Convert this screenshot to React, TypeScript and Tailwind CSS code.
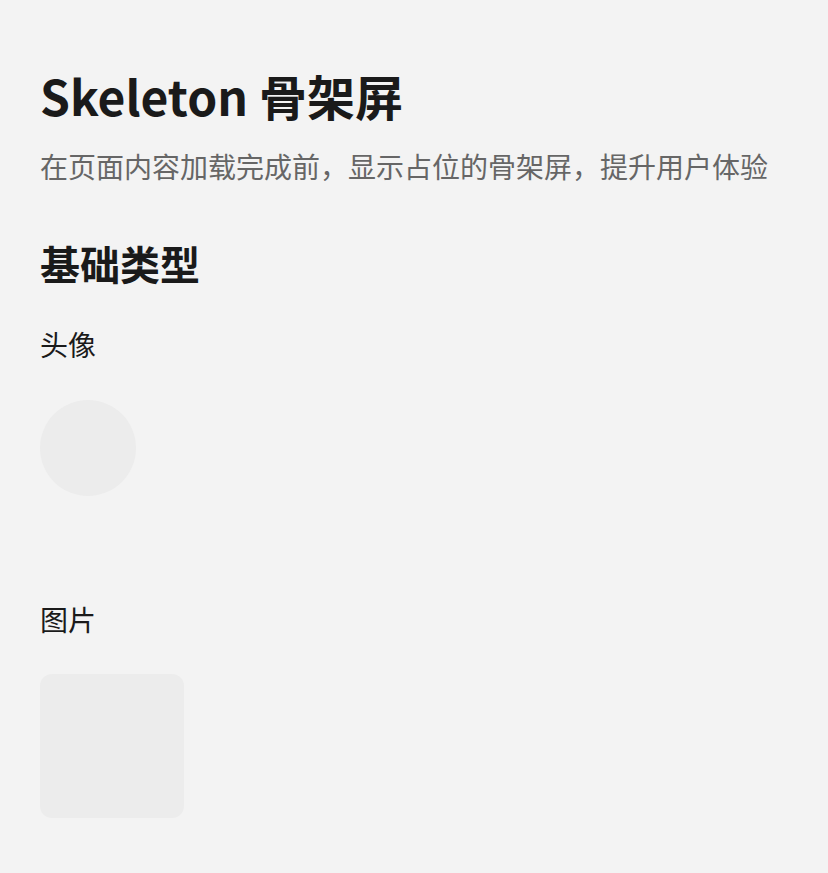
const font = { fontFamily: '"Noto Sans CJK SC", "Noto Sans", sans-serif' };

const Block = ({ className }: { className: string }) => (
  <div className={`bg-[#ececec] ${className}`} />
);

export default function App() {
  return (
    <div className="min-h-screen bg-[#f3f3f3] px-10 pt-[59px] pb-10" style={font}>
      <h1 className="text-[48px] leading-[72px] font-bold text-[#1a1a1a]">Skeleton 骨架屏</h1>
      <p className="mt-[14px] text-[28px] leading-[42px] text-[#666666]">
        在页面内容加载完成前，显示占位的骨架屏，提升用户体验
      </p>

      <h2 className="mt-[46px] text-[40px] leading-[60px] font-bold text-[#1a1a1a]">基础类型</h2>

      <div className="mt-[30px]">
        <div className="text-[28px] leading-[42px] text-[#1a1a1a]">头像</div>
        <Block className="mt-[35px] h-24 w-24 rounded-full" />
      </div>

      <div className="mt-[102px]">
        <div className="text-[28px] leading-[42px] text-[#1a1a1a]">图片</div>
        <Block className="mt-[34px] h-36 w-36 rounded-xl" />
      </div>
    </div>
  );
}
